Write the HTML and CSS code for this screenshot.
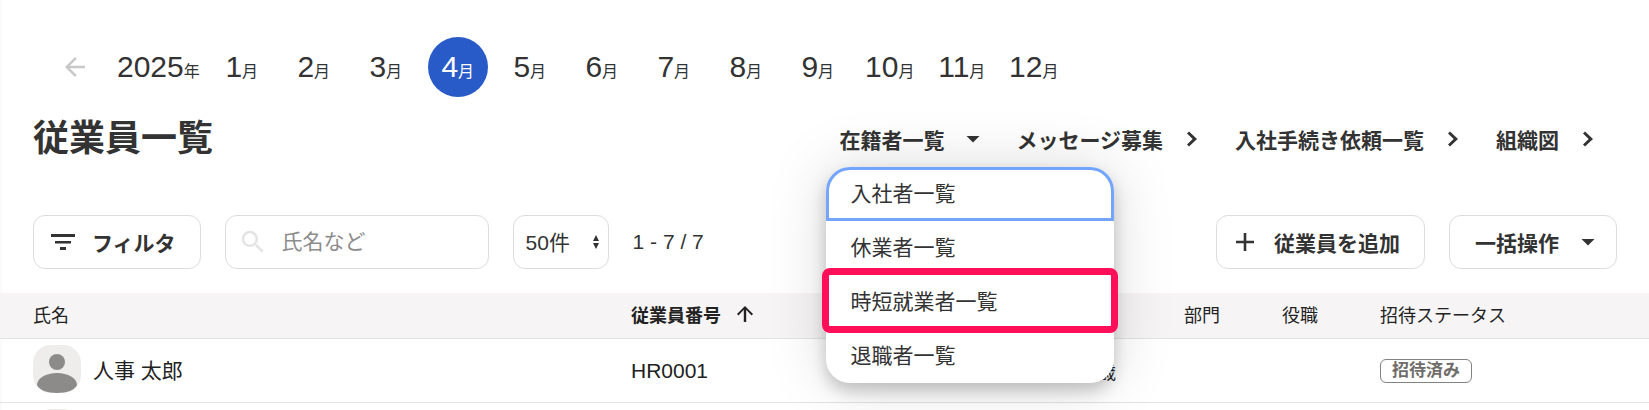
FILE: index.html
```html
<!DOCTYPE html>
<html lang="ja">
  <head>
    <meta charset="UTF-8" />
    <meta name="viewport" content="width=device-width, initial-scale=1.0" />
    <title>従業員一覧</title>
    <link rel="stylesheet" href="styles.css">
  </head>
  <body>
    <main class="page">
      <!-- Month picker -->
      <div class="months">
        <button class="prev" aria-label="前の年">
          <svg width="30" height="30" viewBox="0 0 24 24" fill="currentColor"><path d="M20 11H7.830l5.590-5.590L12 4l-8 8 8 8 1.410-1.410L7.830 13H20v-2z"/></svg>
        </button>
        <span class="year">2025<small>年</small></span>
        <button class="month">1<small>月</small></button>
        <button class="month">2<small>月</small></button>
        <button class="month">3<small>月</small></button>
        <button class="month active">4<small>月</small></button>
        <button class="month">5<small>月</small></button>
        <button class="month">6<small>月</small></button>
        <button class="month">7<small>月</small></button>
        <button class="month">8<small>月</small></button>
        <button class="month">9<small>月</small></button>
        <button class="month">10<small>月</small></button>
        <button class="month">11<small>月</small></button>
        <button class="month">12<small>月</small></button>
      </div>

      <!-- Title and links -->
      <header class="header">
        <h1>従業員一覧</h1>
        <nav class="nav">
          <div class="nav-menu">
            <button class="nav-item" aria-expanded="true">
              在籍者一覧
              <svg class="icon" viewBox="0 0 24 24"><path d="M5.500 9h13L12 15.500z"/></svg>
            </button>
            <ul class="menu">
              <li><a class="focused" href="#">入社者一覧</a></li>
              <li><a href="#">休業者一覧</a></li>
              <li class="marked"><a href="#">時短就業者一覧</a></li>
              <li><a href="#">退職者一覧</a></li>
            </ul>
          </div>
          <a class="nav-item" href="#">
            メッセージ募集
            <svg class="icon" viewBox="0 0 24 24"><path d="M7 6.500L9 4.500 17 12l-8 7.500-2-2 5.700-5.500z"/></svg>
          </a>
          <a class="nav-item" href="#">
            入社手続き依頼一覧
            <svg class="icon" viewBox="0 0 24 24"><path d="M7 6.500L9 4.500 17 12l-8 7.500-2-2 5.700-5.500z"/></svg>
          </a>
          <a class="nav-item" href="#">
            組織図
            <svg class="icon" viewBox="0 0 24 24"><path d="M7 6.500L9 4.500 17 12l-8 7.500-2-2 5.700-5.500z"/></svg>
          </a>
        </nav>
      </header>

      <!-- Toolbar -->
      <div class="toolbar">
        <button class="btn filter">
          <svg class="icon" viewBox="0 0 24 24"><path d="M0 4h24v3H0zM4 11h16v2.500H4zM9 17h6v3H9z"/></svg>
          フィルタ
        </button>
        <label class="search">
          <svg width="30" height="30" viewBox="0 0 24 24" fill="currentColor"><path d="M15.500 14h-.790l-.280-.270A6.471 6.471 0 0 0 16 9.500 6.500 6.500 0 1 0 9.500 16c1.610 0 3.090-.590 4.230-1.570l.270.280v.790l5 4.990L20.490 19l-4.990-5zm-6 0C7.010 14 5 11.990 5 9.500S7.010 5 9.500 5 14 7.010 14 9.500 11.990 14 9.500 14z"/></svg>
          <input type="text" placeholder="氏名など" aria-label="氏名など">
        </label>
        <div class="per-page">
          <select aria-label="表示件数">
            <option>50件</option>
          </select>
          <svg width="6" height="14" viewBox="0 0 6 14"><path d="M3 0l3 6H0zM0 8h6l-3 6z"/></svg>
        </div>
        <span class="range">1 - 7 / 7</span>
        <div class="actions">
          <button class="btn add">
            <svg class="icon" viewBox="0 0 24 24"><path d="M10.700 3h2.600v7.700H21v2.600h-7.700V21h-2.600v-7.700H3v-2.600h7.700z"/></svg>
            従業員を追加
          </button>
          <button class="btn bulk">
            一括操作
            <svg class="icon" viewBox="0 0 24 24"><path d="M5.500 9h13L12 15.500z"/></svg>
          </button>
        </div>
      </div>

      <!-- Employees -->
      <table class="employees">
        <colgroup>
          <col>
          <col class="col-number">
          <col class="col-age">
          <col class="col-dept">
          <col class="col-dept">
          <col class="col-status">
        </colgroup>
        <thead>
          <tr>
            <th class="name">氏名</th>
            <th class="sorted">
              <span>従業員番号
                <svg class="icon" viewBox="0 0 24 24"><path d="M10.800 20V7.800l-5.400 5.600L4 12l8-8 8 8-1.400 1.400-5.400-5.600V20z"/></svg>
              </span>
            </th>
            <th></th>
            <th>部門</th>
            <th>役職</th>
            <th>招待ステータス</th>
          </tr>
        </thead>
        <tbody>
          <tr>
            <td class="name">
              <div class="person">
                <svg class="avatar" viewBox="0 0 48 48"><circle cx="24" cy="17" r="8"/><path d="M4 40c0-7 9-12 20-12s20 5 20 12c-2 5-10 8-20 8S6 45 4 40z"/></svg>
                人事 太郎
              </div>
            </td>
            <td>HR0001</td>
            <td class="age">歳</td>
            <td></td>
            <td></td>
            <td><span class="badge">招待済み</span></td>
          </tr>
          <tr>
            <td class="name">
              <div class="person">
                <svg class="avatar" viewBox="0 0 48 48"><circle cx="24" cy="17" r="8"/><path d="M4 40c0-7 9-12 20-12s20 5 20 12c-2 5-10 8-20 8S6 45 4 40z"/></svg>
              </div>
            </td>
            <td></td>
            <td></td>
            <td></td>
            <td></td>
            <td></td>
          </tr>
        </tbody>
      </table>
    </main>
  </body>
</html>
```
FILE: styles.css
```css
* {
  box-sizing: border-box;
}
body {
  margin: 0;
  background-color: #fff;
  color: #333;
  font-family: "Liberation Sans", "Noto Sans CJK JP", sans-serif;
  font-size: 21px;
}
button,
input,
select {
  font: inherit;
  color: inherit;
}
button {
  padding: 0;
  border: none;
  background: none;
  cursor: pointer;
}
a {
  color: inherit;
  text-decoration: none;
}
.page {
  height: 100vh;
  padding-top: 37px;
  overflow: hidden;
  box-shadow: inset 2px 0 0 #fafafa;
}
.icon {
  flex: none;
  width: 24px;
  height: 24px;
  fill: currentColor;
}
/* Month picker */
.months {
  display: flex;
  align-items: center;
  gap: 12px;
  padding-left: 45px;
  font-size: 30px;
}
.months small {
  font-size: 16px;
  line-height: 1;
}
.prev {
  display: flex;
  align-items: center;
  justify-content: center;
  width: 60px;
  height: 60px;
  color: #c8c8c8;
}
.year,
.month {
  line-height: 60px;
  white-space: nowrap;
}
.month {
  width: 60px;
  height: 60px;
  border-radius: 50%;
}
.month.active {
  background-color: #285ac8;
  color: #fff;
}
/* Title and links */
.header {
  display: flex;
  align-items: center;
  justify-content: space-between;
  height: 54px;
  margin-top: 15px;
  padding: 0 49px 0 33px;
}
h1 {
  margin: 0;
  font-size: 36px;
  line-height: 54px;
}
.nav {
  display: flex;
  gap: 31px;
}
.nav-menu {
  position: relative;
}
.nav-item {
  display: flex;
  align-items: center;
  gap: 17px;
  height: 54px;
  font-weight: bold;
  white-space: nowrap;
}
.menu {
  position: absolute;
  z-index: 10;
  top: 55px;
  left: -13px;
  width: 288px;
  margin: 0;
  padding: 0;
  list-style: none;
  background-color: #fff;
  border-radius: 24px;
  box-shadow: 0 8px 16px rgba(0, 0, 0, 0.2), 0 0 60px rgba(0, 0, 0, 0.15);
}
.menu a {
  display: block;
  padding: 0 24px;
  line-height: 54px;
}
.menu .focused {
  border-radius: 24px 24px 0 0;
  box-shadow: inset 0 0 0 3px #73a5ff;
}
.marked {
  position: relative;
}
.marked::after {
  content: "";
  position: absolute;
  inset: -7px -4px -4px;
  border: 7px solid #ff0f5a;
  border-radius: 8px;
  pointer-events: none;
}
/* Toolbar */
.toolbar {
  display: flex;
  align-items: center;
  gap: 24px;
  margin-top: 49px;
  padding: 0 32px 0 33px;
}
.btn,
.search,
.per-page select {
  height: 54px;
  border: 1px solid #dcdcdc;
  border-radius: 12px;
  background-color: #fff;
}
.btn {
  display: flex;
  align-items: center;
  gap: 17px;
  font-weight: bold;
  white-space: nowrap;
}
.filter {
  padding: 0 24px 0 17px;
}
.search {
  display: flex;
  align-items: center;
  gap: 12px;
  width: 264px;
  padding: 0 12px;
  color: #e3e3e3;
}
.search svg {
  flex: none;
}
.search input {
  flex: 1;
  min-width: 0;
  padding: 0 2px;
  border: none;
  outline: none;
  background: none;
  color: #333;
}
.search input::placeholder {
  color: #8c8c8c;
}
.per-page {
  position: relative;
}
.per-page select {
  width: 96px;
  padding: 0 12px;
  appearance: none;
}
.per-page svg {
  position: absolute;
  top: 20px;
  right: 10px;
  fill: #333;
  pointer-events: none;
}
.actions {
  display: flex;
  gap: 24px;
  margin-left: auto;
}
.add {
  padding: 0 24px 0 16px;
}
.bulk {
  padding: 0 16px 0 25px;
}
/* Employees */
.employees {
  width: 100%;
  margin-top: 24px;
  table-layout: fixed;
  border-collapse: separate;
  border-spacing: 0;
  color: #222;
}
.col-number {
  width: 198px;
}
.col-age {
  width: 355px;
}
.col-dept {
  width: 98px;
}
.col-status {
  width: 269px;
}
.employees th {
  height: 46px;
  padding: 0 0 4px;
  background-color: #f6f4f5;
  border-bottom: 1px solid #e3e3e3;
  font-size: 18px;
  font-weight: normal;
  text-align: left;
}
.employees .sorted {
  font-weight: bold;
}
.sorted span {
  display: flex;
  align-items: center;
  gap: 12px;
}
.employees td {
  height: 64px;
  padding: 0;
  border-bottom: 1px solid #e3e3e3;
}
.employees .name {
  padding-left: 33px;
}
.person {
  display: flex;
  align-items: center;
  gap: 12px;
  padding-bottom: 3px;
}
.avatar {
  width: 48px;
  height: 48px;
  border-radius: 18px;
  background-color: #eeedec;
  fill: #8c8b89;
}
.employees .age {
  padding-right: 68px;
  font-size: 18px;
  text-align: right;
}
.badge {
  display: inline-block;
  padding: 0 11px;
  border: 1px solid #828282;
  border-radius: 6px;
  color: #706d69;
  font-size: 17px;
  font-weight: bold;
  line-height: 22px;
  vertical-align: middle;
}
```
